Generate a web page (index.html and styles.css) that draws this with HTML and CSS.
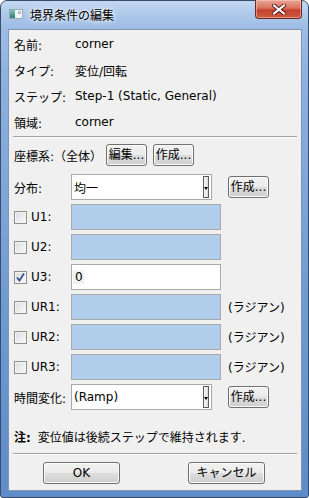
FILE: index.html
```html
<!DOCTYPE html>
<html lang="ja">
<head>
<meta charset="utf-8">
<title>境界条件の編集</title>
<link rel="stylesheet" href="styles.css">
</head>
<body>
<div class="window">
  <div class="titlebar">
    <svg class="app-icon" width="14" height="10" viewBox="0 0 14 10">
      <defs>
        <linearGradient id="ig" x1="0" y1="0" x2="0" y2="1">
          <stop offset="0" stop-color="#7fc2b0"/>
          <stop offset="1" stop-color="#2f7f72"/>
        </linearGradient>
      </defs>
      <rect x="0.5" y="0.5" width="13" height="9" fill="#f4f6f8" stroke="#9aa8b6"/>
      <rect x="1" y="1" width="5" height="8" fill="url(#ig)"/>
      <rect x="9" y="2" width="3" height="3" fill="#b8c2cc"/>
    </svg>
    <span class="title">境界条件の編集</span>
    <div class="close">
      <svg width="14" height="11" viewBox="0 0 14 11">
        <path d="M2 1.5 L12 9.5 M12 1.5 L2 9.5" stroke="#5a1d18" stroke-width="4" stroke-linecap="square" fill="none"/>
        <path d="M2 1.5 L12 9.5 M12 1.5 L2 9.5" stroke="#ffffff" stroke-width="2" stroke-linecap="square" fill="none"/>
      </svg>
    </div>
  </div>
  <div class="client">
    <div class="info">
      <div class="info-row"><span class="info-label">名前:</span><span>corner</span></div>
      <div class="info-row"><span class="info-label">タイプ:</span><span>変位/回転</span></div>
      <div class="info-row"><span class="info-label">ステップ:</span><span>Step-1 (Static, General)</span></div>
      <div class="info-row"><span class="info-label">領域:</span><span>corner</span></div>
    </div>
    <div class="sep"></div>
    <div class="csys-row">
      <span class="csys-label">座標系:（全体）</span>
      <button class="btn btn-small">編集...</button>
      <button class="btn btn-small">作成...</button>
    </div>
    <div class="grid">
      <div class="cell-label">分布:</div>
      <div class="combo"><span class="combo-text">均一</span><span class="combo-arrow"><span class="tri"></span></span></div>
      <div class="cell-extra"><button class="btn btn-small">作成...</button></div>

      <div class="cell-label"><span class="check"></span>U1:</div>
      <div class="field field-off"></div>
      <div class="cell-extra"></div>

      <div class="cell-label"><span class="check"></span>U2:</div>
      <div class="field field-off"></div>
      <div class="cell-extra"></div>

      <div class="cell-label"><span class="check checked"><svg width="9" height="9" viewBox="0 0 9 9"><path d="M1 4.5 L3.5 7.5 L8 0.5" stroke="#3b4f93" stroke-width="1.8" fill="none"/></svg></span>U3:</div>
      <div class="field field-on"><span class="field-value">0</span></div>
      <div class="cell-extra"></div>

      <div class="cell-label"><span class="check"></span>UR1:</div>
      <div class="field field-off"></div>
      <div class="cell-extra unit">(ラジアン)</div>

      <div class="cell-label"><span class="check"></span>UR2:</div>
      <div class="field field-off"></div>
      <div class="cell-extra unit">(ラジアン)</div>

      <div class="cell-label"><span class="check"></span>UR3:</div>
      <div class="field field-off"></div>
      <div class="cell-extra unit">(ラジアン)</div>

      <div class="cell-label">時間変化:</div>
      <div class="combo"><span class="combo-text">(Ramp)</span><span class="combo-arrow"><span class="tri"></span></span></div>
      <div class="cell-extra"><button class="btn btn-small">作成...</button></div>
    </div>
    <div class="note"><b>注:</b> 変位値は後続ステップで維持されます.</div>
    <div class="sep sep-bottom"></div>
    <div class="actions">
      <button class="btn btn-wide">OK</button>
      <button class="btn btn-wide">キャンセル</button>
    </div>
  </div>
</div>
</body>
</html>
```

FILE: styles.css
```css
html, body {
  margin: 0;
  padding: 0;
}
body {
  width: 309px;
  height: 498px;
  overflow: hidden;
  font-family: "DejaVu Sans", "Noto Sans CJK JP", sans-serif;
  font-size: 12px;
  color: #000;
  background: #ffffff;
}
.window {
  width: 309px;
  height: 498px;
  box-sizing: border-box;
  border: 1px solid #3a4d68;
  border-radius: 7px 7px 3px 3px;
  background: linear-gradient(180deg, #c4d8f0 0px, #adc8ea 14px, #9dbce5 28px, #8fb2df 70px, #6f9bd3 300px, #5e8bca 100%);
  padding: 0 6px 6px 7px;
  display: flex;
  flex-direction: column;
}
.titlebar {
  height: 28px;
  flex: none;
  display: flex;
  align-items: flex-start;
}
.app-icon {
  margin: 8px 0 0 1px;
  flex: none;
}
.title {
  margin: 5px 0 0 7px;
  line-height: 18px;
  font-family: "Noto Sans CJK JP", sans-serif;
  font-size: 12px;
  color: #000;
  text-shadow: 0 0 6px #ffffff, 0 0 3px #ffffff;
}
.close {
  margin: -1px 0 0 auto;
  width: 45px;
  height: 18px;
  border: 1px solid #6a2a24;
  border-top: none;
  border-radius: 0 0 4px 4px;
  background: linear-gradient(180deg, #e9a497 0%, #d9735f 45%, #c4412f 55%, #cf5a3f 100%);
  box-shadow: inset 0 0 0 1px rgba(255, 210, 200, 0.5);
  display: flex;
  align-items: center;
  justify-content: center;
}
.client {
  flex: 1;
  border: 1px solid #7f95b2;
  background: #f0f0f0;
  padding: 1px 0 0 0;
  display: flex;
  flex-direction: column;
}
.info {
  display: flex;
  flex-direction: column;
  padding-left: 5px;
}
.info-row {
  height: 26px;
  display: flex;
  align-items: center;
}
.info-label {
  width: 61px;
  flex: none;
}
.sep {
  margin: 1px 4px 0 4px;
  height: 0;
  border-top: 1px solid #a0a0a0;
  border-bottom: 1px solid #ffffff;
}
.csys-row {
  margin-top: 6px;
  padding-left: 5px;
  height: 22px;
  display: flex;
  align-items: center;
  gap: 6px;
}
.csys-label {
  width: 92px;
  flex: none;
  margin-right: -6px;
  white-space: nowrap;
}
.btn {
  font-family: "DejaVu Sans", "Noto Sans CJK JP", sans-serif;
  font-size: 12px;
  color: #000;
  border: 1px solid #707070;
  border-radius: 3px;
  background: linear-gradient(180deg, #f2f2f2 0%, #ebebeb 48%, #dddddd 52%, #cfcfcf 100%);
  box-shadow: inset 0 0 0 1px #fbfbfb;
  padding: 0;
  margin: 0;
  height: 22px;
  line-height: 18px;
  box-sizing: border-box;
}
.btn-small {
  width: 41px;
}
.grid {
  margin-top: 8px;
  padding-left: 5px;
  display: grid;
  grid-template-columns: 50px 150px auto;
  grid-auto-rows: 26px;
  row-gap: 4px;
  column-gap: 7px;
}
.cell-label {
  display: flex;
  align-items: center;
  white-space: nowrap;
}
.cell-extra {
  display: flex;
  align-items: center;
  white-space: nowrap;
}
.unit {
  padding-bottom: 1px;
}
.check {
  width: 11px;
  height: 11px;
  border: 1px solid #8e8f8f;
  background: linear-gradient(135deg, #dcdcdc 0%, #eeeeee 60%, #fbfbfb 100%);
  box-shadow: inset 0 0 0 1px #f4f4f4;
  margin-right: 4px;
  flex: none;
  display: flex;
  align-items: center;
  justify-content: center;
}
.combo {
  width: 141px;
  box-sizing: border-box;
  border: 1px solid #a9a9a9;
  background: #ffffff;
  display: flex;
  align-items: center;
  padding-left: 2px;
}
.combo-text {
  flex: 1;
}
.combo-arrow {
  width: 4px;
  height: 20px;
  border: 1px solid #5c5c5c;
  background: linear-gradient(90deg, #f7f7f7, #dedede);
  margin-right: 2px;
  display: flex;
  justify-content: center;
  align-items: flex-start;
  box-sizing: content-box;
}
.tri {
  margin-top: 10px;
  width: 0;
  height: 0;
  border-left: 2px solid transparent;
  border-right: 2px solid transparent;
  border-top: 3px solid #000;
}
.field {
  box-sizing: border-box;
  border: 1px solid #a9a9a9;
  display: flex;
  align-items: center;
}
.field-off {
  background: #b0cdeb;
}
.field-on {
  background: #ffffff;
}
.field-value {
  padding-left: 2px;
  background: #f1f1f1;
  padding-right: 1px;
  margin-left: 1px;
}
.note {
  margin-top: 18px;
  padding-left: 5px;
  height: 20px;
  line-height: 20px;
  white-space: nowrap;
}
.note b {
  font-weight: bold;
  margin-right: 3px;
}
.sep-bottom {
  margin-top: 5px;
}
.actions {
  margin-top: 7px;
  padding-left: 34px;
  display: flex;
  gap: 68px;
}
.btn-wide {
  width: 77px;
}
```
